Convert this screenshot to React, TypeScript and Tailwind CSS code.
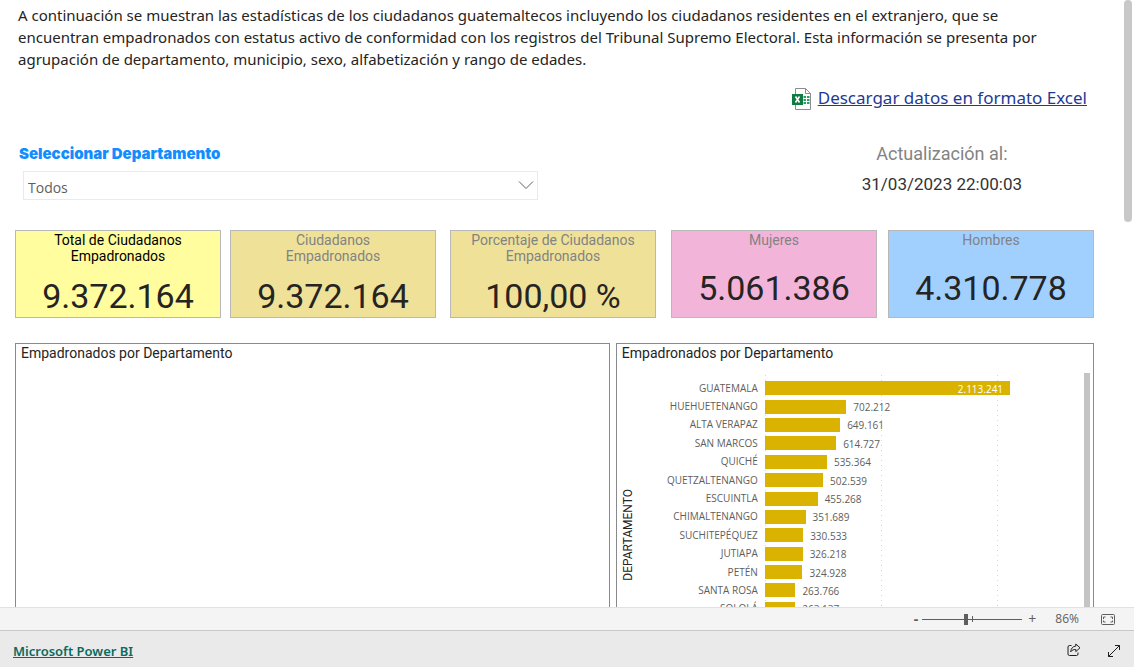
import { useState } from 'react'

interface Card {
  title: string
  value: string
  box: string
  titleColor: string
}

interface Row {
  name: string
  total: number
}

const CARDS: Card[] = [
  { title: 'Total de Ciudadanos\nEmpadronados', value: '9.372.164', box: 'mr-[9px] bg-[#fffd9d]', titleColor: 'text-black' },
  { title: 'Ciudadanos\nEmpadronados', value: '9.372.164', box: 'mr-3.5 bg-[#efe198]', titleColor: 'text-[#838383]' },
  { title: 'Porcentaje de Ciudadanos\nEmpadronados', value: '100,00 %', box: 'mr-[15px] bg-[#efe198]', titleColor: 'text-[#838383]' },
  { title: 'Mujeres', value: '5.061.386', box: 'mr-[11px] bg-[#f3b4da]', titleColor: 'text-[#838383]' },
  { title: 'Hombres', value: '4.310.778', box: 'bg-[#a1d0ff]', titleColor: 'text-[#838383]' },
]

const ROWS: Row[] = [
  { name: 'GUATEMALA', total: 2113241 },
  { name: 'HUEHUETENANGO', total: 702212 },
  { name: 'ALTA VERAPAZ', total: 649161 },
  { name: 'SAN MARCOS', total: 614727 },
  { name: 'QUICHÉ', total: 535364 },
  { name: 'QUETZALTENANGO', total: 502539 },
  { name: 'ESCUINTLA', total: 455268 },
  { name: 'CHIMALTENANGO', total: 351689 },
  { name: 'SUCHITEPÉQUEZ', total: 330533 },
  { name: 'JUTIAPA', total: 326218 },
  { name: 'PETÉN', total: 324928 },
  { name: 'SANTA ROSA', total: 263766 },
  { name: 'SOLOLÁ', total: 263137 },
]

// Right end of the horizontal axis
const AXIS_MAX = 2750000
const TICKS = [0, 1000000, 2000000]

const pct = (n: number) => `${(n / AXIS_MAX) * 100}%`
const format = (n: number) => String(n).replace(/\B(?=(\d{3})+$)/g, '.')

function ExcelIcon() {
  return (
    <svg className="h-6 w-5 shrink-0" viewBox="0 0 20 24" fill="none">
      <path d="M3.5 1.5h10l5 5v16h-15z" fill="#fff" stroke="#8c8c8c" />
      <path d="M13.5 1.5v5h5" stroke="#8c8c8c" />
      <path d="M11.500 9h2.500v2h-2.500zM15 9h2.500v2h-2.500zM11.500 12h2.500v2h-2.500zM15 12h2.500v2h-2.500zM11.500 15h2.500v2h-2.500zM15 15h2.500v2h-2.500z" fill="#21a366" />
      <path d="M0 7h11v11H0z" fill="#107c41" />
      <path d="M3.500 9.500l4 6M7.500 9.500l-4 6" stroke="#fff" strokeWidth="1.600" />
    </svg>
  )
}

function BarChart() {
  return (
    <div className="flex min-h-0 flex-1 overflow-hidden pr-[3px]">
      <div className="flex w-[22px] shrink-0 items-end justify-center pb-[26px]">
        <span className="rotate-180 whitespace-nowrap font-['Roboto',sans-serif] text-xs text-[#252423] [writing-mode:vertical-rl]">
          DEPARTAMENTO
        </span>
      </div>
      <div className="relative mt-3 min-w-0 flex-1">
        <div className="absolute inset-y-0 right-0 left-[126px]">
          {TICKS.map(t => (
            <div
              key={t}
              className="absolute inset-y-0 w-px bg-[repeating-linear-gradient(to_bottom,#d5d5d5_0_1px,transparent_1px_5px)]"
              style={{ left: pct(t) }}
            />
          ))}
        </div>
        <ul className="relative mt-1 flex h-[239px] flex-col font-['Open_Sans',sans-serif] text-[10px] text-[#605e5c]">
          {ROWS.map((r, i) => (
            <li key={r.name} className="flex flex-1 items-center">
              <span className="w-[119px] shrink-0 text-right">{r.name}</span>
              <div className="ml-[7px] flex min-w-0 flex-1 items-center">
                <div
                  className="flex h-3.5 shrink-0 items-center justify-end bg-[#d9b300] pr-[7px] text-white"
                  style={{ width: pct(r.total) }}
                >
                  {i === 0 && <span className="pt-0.5">{format(r.total)}</span>}
                </div>
                {i > 0 && <span className="pt-0.5 pl-[7px]">{format(r.total)}</span>}
              </div>
            </li>
          ))}
        </ul>
      </div>
      <div className="mt-2.5 w-1.5 shrink-0 bg-[#c4c4c4]" />
    </div>
  )
}

export default function App() {
  const [departamento, setDepartamento] = useState('Todos')
  const [zoom, setZoom] = useState(86)

  return (
    <div className="flex h-screen flex-col overflow-hidden bg-white font-['Open_Sans',sans-serif]">
      <main className="flex min-h-0 flex-1">
        <div className="flex min-w-0 flex-1 flex-col pr-[30px] pl-[15px]">
          <p className="mt-1 pr-8 pl-[3px] font-['Noto_Sans',sans-serif] text-[15px] leading-[22px] text-[#252423]">
            A continuación se muestran las estadísticas de los ciudadanos guatemaltecos incluyendo los ciudadanos
            residentes en el extranjero, que se encuentran empadronados con estatus activo de conformidad con los
            registros del Tribunal Supremo Electoral. Esta información se presenta por agrupación de departamento,
            municipio, sexo, alfabetización y rango de edades.
          </p>

          <div className="mt-[17px] flex items-center justify-end gap-1.5 pr-[7px]">
            <ExcelIcon />
            <a href="#excel" className="-mt-0.5 font-['Noto_Sans',sans-serif] text-[17px] leading-6 text-[#1f3a93] underline">
              Descargar datos en formato Excel
            </a>
          </div>

          <div className="mt-[33px] flex items-start justify-between">
            <div className="w-[523px] pl-1">
              <label htmlFor="departamento" className="block font-['Inter',sans-serif] text-[15px] leading-5 font-black text-[#118dff]">
                Seleccionar Departamento
              </label>
              <div className="relative mt-[7px] ml-1">
                <select
                  id="departamento"
                  value={departamento}
                  onChange={e => setDepartamento(e.target.value)}
                  className="block h-[29px] w-full appearance-none border border-[#eaeaea] bg-white px-1 pt-1 text-sm leading-5 text-[#605e5c]"
                >
                  <option>Todos</option>
                  {ROWS.map(r => (
                    <option key={r.name}>{r.name}</option>
                  ))}
                </select>
                <svg className="pointer-events-none absolute top-2.5 right-1 h-2 w-4" viewBox="0 0 16 8" fill="none" stroke="#605e5c">
                  <path d="M1 .5l7 7 7-7" />
                </svg>
              </div>
            </div>
            <div className="mr-[72px] text-center font-['Roboto',sans-serif] leading-[30px]">
              <p className="-mt-[5px] text-lg leading-[30px] text-[#838383]">Actualización al:</p>
              <p className="text-[17px] text-[#333]">31/03/2023 22:00:03</p>
            </div>
          </div>

          <section className="mt-[30px] flex font-['Roboto',sans-serif]">
            {CARDS.map((c, i) => (
              <article
                key={i}
                className={`flex h-[88px] min-w-0 flex-1 flex-col border border-[#b8b8b8] px-3 text-center ${c.box}`}
              >
                <h2 className={`pt-px text-sm leading-4 whitespace-pre-line ${c.titleColor}`}>{c.title}</h2>
                <p className="flex flex-1 items-center justify-center pt-2.5 text-[34px] leading-10 text-[#252423]">{c.value}</p>
              </article>
            ))}
          </section>

          <div className="mt-[25px] flex min-h-0 flex-1 gap-1.5">
            <section className="min-w-0 flex-[595] border border-b-0 border-[#8a8a8a]">
              <h2 className="pl-[5px] font-['Roboto',sans-serif] text-sm leading-[18px] text-[#252423]">
                Empadronados por Departamento
              </h2>
            </section>
            <section className="flex min-w-0 flex-[478] flex-col border border-b-0 border-[#8a8a8a]">
              <h2 className="pb-px pl-[5px] font-['Roboto',sans-serif] text-sm leading-[18px] text-[#252423]">
                Empadronados por Departamento
              </h2>
              <BarChart />
            </section>
          </div>
        </div>
        <div className="mr-0.5 h-[222px] w-2 rounded-full bg-[#c8c8c8]" />
      </main>

      <div className="flex h-6 shrink-0 items-center justify-end border-y border-t-[#e1e1e1] border-b-[#c8c8c8] bg-[#f4f4f4] pr-[19px] text-xs text-[#605e5c]">
        <button type="button" aria-label="Alejar" className="text-sm font-bold" onClick={() => setZoom(z => Math.max(10, z - 10))}>
          -
        </button>
        <div className="relative mr-1.5 ml-1 flex h-3 w-[100px] items-center">
          <div className="absolute left-1/2 h-1.5 w-px bg-[#605e5c]" />
          <input
            type="range"
            aria-label="Zoom"
            min={0}
            max={200}
            value={zoom}
            onChange={e => setZoom(Number(e.target.value))}
            className="relative h-px w-full appearance-none bg-[#605e5c] [&::-webkit-slider-thumb]:h-[11px] [&::-webkit-slider-thumb]:w-1 [&::-webkit-slider-thumb]:appearance-none [&::-webkit-slider-thumb]:bg-[#605e5c]"
          />
        </div>
        <button type="button" aria-label="Acercar" className="text-sm" onClick={() => setZoom(z => Math.min(200, z + 10))}>
          +
        </button>
        <output className="ml-[19px]">{zoom}%</output>
        <button type="button" aria-label="Ajustar a la página" className="ml-[22px]">
          <svg className="h-[11px] w-3.5" viewBox="0 0 14 11" fill="none" stroke="#605e5c">
            <rect x=".5" y=".5" width="13" height="10" rx="1" />
            <path d="M4.500 3h-2v2M4.500 8h-2V6.500M9.500 3h2v2M9.500 8h2V6.500" />
          </svg>
        </button>
      </div>

      <footer className="flex h-9 shrink-0 items-center bg-[#eaeaea] pr-[13px] pl-[13px]">
        <a href="#powerbi" className="pt-1 font-['Noto_Sans',sans-serif] text-[13px] leading-5 font-semibold text-[#0b6a5e] underline">
          Microsoft Power BI
        </a>
        <button type="button" aria-label="Compartir" className="mt-0.5 ml-auto">
          <svg className="h-3.5 w-3.5" viewBox="0 0 14 14" fill="none" stroke="#1f1f1f">
            <path d="M4.500 2.500h-2a1.500 1.500 0 0 0-1.500 1.500v7a1.500 1.500 0 0 0 1.500 1.500h7a1.500 1.500 0 0 0 1.500-1.500V9.500" />
            <path d="M8.800 1l4.200 3.800-4.200 3.800V6.500C6.500 6.400 5 7.100 3.700 8.800 4 5.500 5.700 3.300 8.800 3.100z" strokeLinejoin="round" />
          </svg>
        </button>
        <button type="button" aria-label="Pantalla completa" className="mt-1 ml-[26px]">
          <svg className="h-3.5 w-3.5" viewBox="0 0 14 14" fill="none" stroke="#1f1f1f">
            <path d="M1.500 12.500l11-11M8 1.500h4.500V6M1.500 8v4.500H6" />
          </svg>
        </button>
      </footer>
    </div>
  )
}
